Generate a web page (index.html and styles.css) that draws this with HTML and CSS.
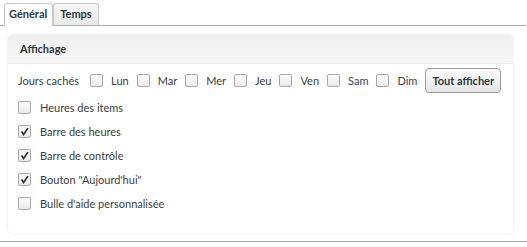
FILE: index.html
```html
<!doctype html>
<html>

<head>
	<meta charset="UTF-8">
	<title>Options</title>
	<link rel="stylesheet" href="styles.css">
</head>

<body>
	<div class="tabs">
		<div class="tab active">Général</div>
		<div class="tab">Temps</div>
	</div>
	<div class="panel">
		<div class="panel_head">Affichage</div>
		<div class="panel_body">
			<div class="days">
				<span class="days_label">Jours cachés</span>
				<span class="chk"></span><span class="day">Lun</span>
				<span class="chk"></span><span class="day">Mar</span>
				<span class="chk"></span><span class="day">Mer</span>
				<span class="chk"></span><span class="day">Jeu</span>
				<span class="chk"></span><span class="day">Ven</span>
				<span class="chk"></span><span class="day">Sam</span>
				<span class="chk"></span><span class="day">Dim</span>
				<button class="btn">Tout afficher</button>
			</div>
			<div class="opt"><span class="chk"></span>Heures des items</div>
			<div class="opt"><span class="chk checked"><svg viewBox="0 0 13 13"><path d="M3 6.5 L5.5 10 L10.5 2.5" /></svg></span>Barre des heures</div>
			<div class="opt"><span class="chk checked"><svg viewBox="0 0 13 13"><path d="M3 6.5 L5.5 10 L10.5 2.5" /></svg></span>Barre de contrôle</div>
			<div class="opt"><span class="chk checked"><svg viewBox="0 0 13 13"><path d="M3 6.5 L5.5 10 L10.5 2.5" /></svg></span>Bouton "Aujourd'hui"</div>
			<div class="opt"><span class="chk"></span>Bulle d'aide personnalisée</div>
		</div>
	</div>
	<div class="bottom_line"></div>
</body>

</html>
```

FILE: styles.css
```css
body {
	margin: 0;
	background: #fff;
	font-family: Lato, "Liberation Sans", sans-serif;
	font-size: 11px;
	color: #3a3f41;
	white-space: nowrap;
}

.tabs {
	display: flex;
	padding: 3px 0 0 4px;
	border-bottom: 1px solid #a3b1ab;
	width: 522px;
}

.tab {
	height: 21px;
	line-height: 20px;
	padding: 0 6px;
	border: 1px solid #c9c9c9;
	border-bottom: none;
	border-radius: 3px 3px 0 0;
	font-weight: bold;
	color: #2e3a3f;
	background: linear-gradient(#f6f6f6, #e9e9e9);
}

.tab.active {
	background: #fff;
	height: 22px;
	margin-bottom: -1px;
	padding: 0 5px 0 4px;
}

.panel {
	margin: 9px 0 0 8px;
	width: 505px;
	height: 198px;
	border-radius: 4px;
	box-shadow: 0 0 3px rgba(0, 0, 0, 0.13);
	background: #fff;
}

.panel_head {
	height: 28px;
	line-height: 28px;
	padding-left: 12px;
	font-weight: bold;
	color: #2e3a3f;
	background: linear-gradient(#efefef, #f7f7f7);
	border-bottom: 1px solid #e8e8e8;
	border-radius: 4px 4px 0 0;
}

.panel_body {
	padding: 4px 10px 0 10px;
}

.days {
	display: flex;
	align-items: center;
	height: 25px;
}

.days_label {
	margin-right: 11px;
}

.day {
	margin: 0 8px 0 8px;
}

.chk {
	display: inline-block;
	flex: none;
	width: 13px;
	height: 13px;
	box-sizing: border-box;
	border: 1px solid #a9a9a9;
	border-radius: 2px;
	background: linear-gradient(#fdfdfd, #e9e9e9);
	vertical-align: middle;
}

.chk svg {
	display: block;
	width: 11px;
	height: 11px;
}

.chk path {
	fill: none;
	stroke: #333;
	stroke-width: 2;
}

.btn {
	height: 25px;
	padding: 0 6px;
	border: 1px solid #9a9a9a;
	border-radius: 4px;
	background: linear-gradient(#fbfbfb, #e6e6e6);
	font-family: inherit;
	font-size: 11px;
	font-weight: bold;
	color: #2e3a3f;
}

.opt {
	display: flex;
	align-items: center;
	height: 24.2px;
}

.days+.opt {
	margin-top: 2px;
}

.opt .chk {
	margin-right: 9px;
}

.bottom_line {
	margin-top: 8px;
	width: 527px;
	border-top: 1px solid #a3b1ab;
}
```
